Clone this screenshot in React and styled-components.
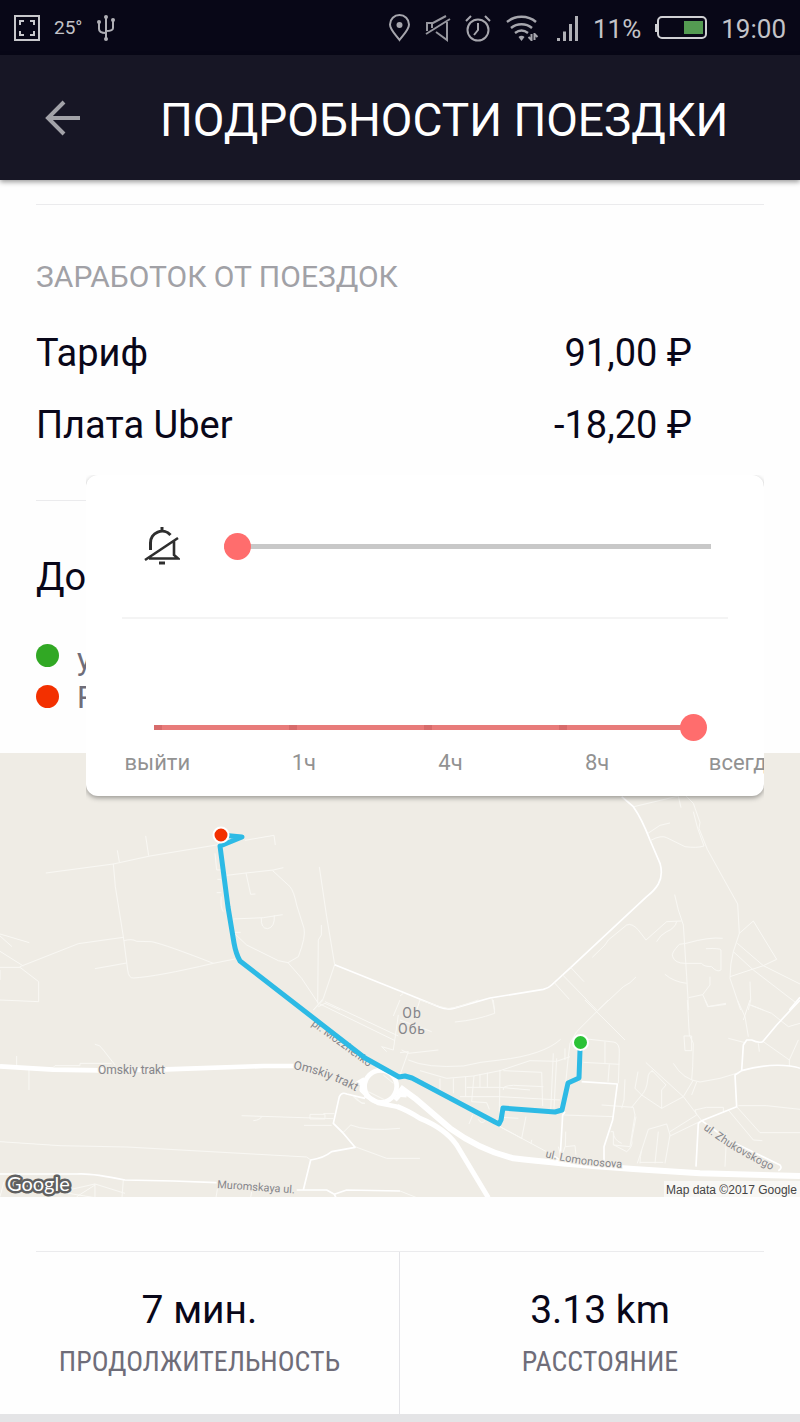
import { useState } from 'react';
import styled, { createGlobalStyle } from 'styled-components';

const GlobalStyle = createGlobalStyle`
  * {
    box-sizing: border-box;
  }

  body {
    margin: 0;
    background: #fefefe;
    color: #090719;
    font-family: Roboto, "Liberation Sans", sans-serif;
  }
`;

const Page = styled.div`
  position: relative;
`;

const StatusBar = styled.div`
  display: flex;
  justify-content: space-between;
  height: 55px;
  padding: 0 14px;
  background: #080717;
`;

const StatusGroup = styled.div`
  display: flex;
  align-items: center;
  gap: 14px;

  svg {
    flex: none;
  }
`;

const StatusText = styled.span`
  padding-top: 3px;
  color: #c3c3c8;
  font-size: 26px;
`;

const Temperature = styled.span`
  color: #c3c3c8;
  font-size: 19px;
`;

const AppBar = styled.header`
  position: relative;
  display: flex;
  align-items: center;
  gap: 72px;
  height: 125px;
  padding: 0 36px;
  background: #171625;
  box-shadow: 0 2px 5px rgba(0, 0, 0, 0.4);
`;

const BackButton = styled.button`
  display: flex;
  padding: 0;
  border: 0;
  background: none;
`;

const Title = styled.h1`
  margin: 0;
  padding-top: 4px;
  color: #fff;
  font-size: 46px;
  font-weight: 400;
  line-height: 56px;
  white-space: nowrap;
`;

const Section = styled.section`
  margin: 0 36px;
  border-top: 1px solid #ebebed;
`;

const Earnings = styled(Section)`
  margin-top: 24px;
  padding: 52px 72px 39px 0;
`;

const SectionTitle = styled.h2`
  margin: 0 0 20px;
  color: #a1a1a6;
  font-size: 30px;
  font-weight: 400;
  line-height: 40px;
`;

const Row = styled.div`
  display: flex;
  justify-content: space-between;
  font-size: 38px;
  line-height: 72px;
`;

const Income = styled(Section)`
  padding: 40px 0 36px;
`;

const Route = styled.div`
  display: flex;
  gap: 18px;
  margin-top: 28px;
`;

const Dots = styled.div`
  display: flex;
  flex-direction: column;
  gap: 18px;
  padding-top: 3px;
`;

const Dot = styled.span`
  width: 23px;
  height: 23px;
  border-radius: 50%;
  background: ${({ $color }) => $color};
`;

const Stops = styled.ul`
  margin: 0;
  padding: 0;
  color: #6f6d79;
  font-size: 31px;
  line-height: 38px;
  list-style: none;
`;

const MapImage = styled.svg`
  display: block;
  width: 100%;
  height: auto;
  background: #efece5;
`;

const Summary = styled(Section)`
  margin-top: 54px;
`;

const Metrics = styled.div`
  display: grid;
  grid-template-columns: 1fr 1fr;
  margin: 0 -36px;
`;

const Metric = styled.div`
  padding: 30px 0;
  text-align: center;

  &:first-child {
    border-right: 1px solid #e4e4e8;
  }
`;

const MetricValue = styled.div`
  font-size: 39px;
  line-height: 56px;
`;

const MetricName = styled.div`
  padding-top: 2px;
  color: #6f6d79;
  font-family: "Roboto Condensed", Roboto, sans-serif;
  font-size: 28px;
  line-height: 44px;
`;

const Footer = styled.div`
  height: 8px;
  background: #e4e4e6;
`;

const VolumeCard = styled.div`
  position: absolute;
  top: 475px;
  right: 36px;
  left: 86px;
  padding: 0 36px 19px;
  border-radius: 12px;
  background: #fff;
  box-shadow: 0 2px 5px rgba(0, 0, 0, 0.36);
  clip-path: inset(0 0 -10px 0);
`;

const VolumeRow = styled.div`
  display: flex;
  align-items: center;
  gap: 44px;
  height: 142px;
  padding: 0 17px 0 22px;
`;

const DurationRow = styled.div`
  padding: 94px 21px 0 18px;
  border-top: 2px solid #f4f4f4;
`;

const Range = styled.input`
  display: block;
  flex: 1;
  width: 100%;
  height: 28px;
  margin: 0;
  background: none;
  appearance: none;

  &::-webkit-slider-runnable-track {
    height: 5px;
    background: #c8c8c8;
  }

  &::-webkit-slider-thumb {
    width: 27px;
    height: 27px;
    margin-top: -11px;
    border-radius: 50%;
    background: #ff6d6d;
    appearance: none;
  }
`;

const StepRange = styled(Range)`
  &::-webkit-slider-runnable-track {
    background: repeating-linear-gradient(90deg, #d76b6b 0 8px, #e87b7a 8px 25%) center / calc(100% - 27px) 100% no-repeat;
  }
`;

const Steps = styled.div`
  display: grid;
  grid-template-columns: repeat(5, 1fr);
  margin: 8px -110px 0 -56px;
  color: #929292;
  font-size: 22px;
  line-height: 28px;
  text-align: center;
`;

const earnings = [
  { name: 'Тариф', amount: '91,00 ₽' },
  { name: 'Плата Uber', amount: '-18,20 ₽' },
];

const steps = ['выйти', '1ч', '4ч', '8ч', 'всегда'];

const StatusIcons = () => (
  <>
    <svg width="23" height="28" viewBox="0 0 23 28" fill="none" stroke="#a6a6ad" strokeWidth="2">
      <path d="M11.500 26C7 20 2 15.500 2 10.500a9.500 9.500 0 0 1 19 0C21 15.500 16 20 11.500 26z" />
      <circle cx="11.500" cy="11" r="3" fill="#a6a6ad" stroke="none" />
    </svg>
    <svg width="26" height="28" viewBox="0 0 26 28" fill="none" stroke="#96969e" strokeWidth="2">
      <path d="M2 17V9h6L21 2M22 8v18l-11-8M1 20L25 5" />
      <path d="M7 9v5" />
    </svg>
    <svg width="26" height="28" viewBox="0 0 26 28" fill="none" stroke="#a6a6ad" strokeWidth="2">
      <circle cx="13" cy="16" r="10.500" />
      <path d="M13 9v7l-4 5M1 7l5-5M25 7l-5-5" />
    </svg>
    <svg width="38" height="28" viewBox="0 0 38 28" fill="none" stroke="#a6a6ad" strokeWidth="2.400">
      <path d="M2 8c8-7 21-7 29 0M6 14c6-5 15-5 21 0M10 19c4-3 9-3 13 0" />
      <path d="M13.500 23a4 4 0 0 1 6 0l-3 4z" fill="#a6a6ad" stroke="none" />
      <path d="M26.500 20v7M29.500 19v7M26.500 26l-3-3M29.500 20l3 3" strokeWidth="2" />
    </svg>
    <svg width="22" height="28" viewBox="0 0 22 28" fill="#b0b0b6">
      <path d="M0 24h3v3H0zM6 17.500h3V27H6zM12 10h3v17h-3zM18 2h3v25h-3z" />
    </svg>
  </>
);

const TripMap = () => (
  <MapImage viewBox="0 0 800 444" role="img" aria-label="Map">
    <defs>
      <path id="mozzhenko" d="M311 272L378 321" />
      <path id="omskiy" d="M293 316Q328 322 360 341" />
      <path id="lomonosova" d="M545 404Q580 413 626 415" />
      <path id="zhukovskogo" d="M703 376Q735 401 778 420" />
    </defs>

    {/* four quarters of the road net, drawn at three units to a pixel */}
    <g fill="none" stroke="#f9f8f4" strokeWidth="3" strokeLinejoin="round">
      <g transform="translate(0 37) scale(.33333)">
        <path d="M138 249L340 222L450 198L655 164M735 151L822 136L826 165M352 181L358 216M437 138L446 197M340 222L346 290L370 440L383 540Q386 565 400 564Q470 560 640 520L705 507M285 536L380 519M60 530L235 461L370 442M372 452Q395 445 410 454L455 455Q500 465 640 520" />
        <path d="M0 484L70 528M0 432L88 458M0 438L36 470M0 532H60L116 575V635L0 630M0 540V570M645 190L650 240H665M680 256L738 249L820 240L850 233M738 249L752 313L766 312M818 242L870 290Q882 305 890 345L912 415Q918 440 895 500L864 518L835 512L740 465L705 432M864 518L905 565L955 640M700 387L790 383L848 374M784 384Q782 416 803 416Q825 412 823 376M652 268H664M650 308H664M664 320Q660 350 670 365M700 427H722" />
        <path d="M958 231L980 380L1004 524L970 625L940 660M964 405V435L955 450L953 640M955 650L975 640L1020 660" />
        <path d="M1004 524L1200 603" stroke="#fff" strokeWidth="5" />
      </g>
      <g transform="translate(400 37) scale(.33333)">
        <path d="M665 20L700 50Q725 85 750 150L780 220Q790 255 775 282Q765 300 740 320L515 530L455 585Q445 595 430 598L270 624L160 655Q140 660 120 652L0 603" stroke="#fff" strokeWidth="5" />
        <path d="M702 50L835 18L843 53M858 18L880 40L900 97L897 115L922 178L970 265L1013 342L1018 430L1000 485Q990 520 990 565L1022 660M880 65L893 115L912 168Q890 175 855 170L800 143Q785 134 752 151M744 130L780 106L810 99" />
        <path d="M577 502L615 465L625 450L680 405Q695 398 715 420L738 450L800 395L845 393M770 455Q780 435 800 425Q825 415 830 395M824 314L835 360L850 405L860 560L866 660M968 445Q930 440 858 460L838 463Q812 490 818 500Q825 520 855 520H905Q910 530 935 530Q950 548 963 540V480Q960 474 918 476M795 553Q820 575 860 580M866 623L908 614L930 585V560M908 614L925 650L978 643M1018 430L1060 393L1130 508L1090 527L990 560M1012 460L1090 527L1200 582M1000 485L1060 540L1190 640M1050 575L1052 630L1045 660M1052 645L1090 660M512 532L552 575M487 554L590 660M463 578L508 628M595 660L670 590L690 578L708 561M276 626L284 660M60 630L50 660M0 618L10 610" />
        <path d="M1168 660L1200 622" stroke="#fff" strokeWidth="5" />
      </g>
      <g transform="translate(0 247) scale(.33333)">
        <path d="M87 210V270M50 168V195M160 202L165 197H240V190H335M285 133Q300 133 310 150L345 195M725 347L1000 356M785 350Q780 360 760 362M930 343H975V357H930zM970 341H1003M912 376H995M0 425L180 437L380 441L920 471L932 480M1000 370L1030 397L1052 375Q1100 395 1200 385M1030 402L1065 440L1160 475H1200M940 30L970 0M960 12L1185 122M975 5L1195 108M1195 45L1180 150L1145 140L1160 155M1200 0L1180 48M0 590L12 545M205 570L285 552V593L205 580M285 552L375 580M370 540L366 593M655 550L648 593M755 575L752 593M1065 290L1085 310H1095M1060 290Q1080 310 1095 310M230 590L285 555" />
        <path d="M0 522H230Q270 518 375 540L520 543L650 548M890 570H980L1003 583L1040 570L1200 573M1003 583L1008 593M910 570L932 480Q970 475 995 455L1065 442L1030 400L1000 370L1018 290Q1025 275 1040 282L1095 295" stroke="#fff" strokeWidth="5" />
        <g stroke="#fff" strokeWidth="14">
          <path d="M0 199L160 209L300 211L500 208L790 198L885 198M1065 255L1090 240L1085 270L1105 290" />
          <circle cx="1142" cy="259" r="48" />
          <path d="M1095 285L1135 309L1200 322M1185 270L1200 280M1185 300L1200 283" />
        </g>
        <path d="M1150 225L1180 250M1105 275L1155 300" />
      </g>
      <g transform="translate(400 247) scale(.33333)">
        <path d="M60 0L120 20Q145 30 170 22L235 0M280 0L284 40Q230 60 165 66M0 158L25 155L0 225M5 150L25 160L115 150M25 180Q80 205 190 198Q240 185 300 180Q430 165 482 118M60 212L140 235L220 228L300 212L390 182L470 184L510 170M0 60L95 95M555 0L675 120M625 0L530 95L510 130L505 170L490 320M540 118L570 118L640 126Q660 128 658 160L655 250M615 125V190M550 187L658 193M628 193L624 245M120 235V275M160 235V280M197 230V290M222 228L215 305L260 308L268 328M240 222V262M262 218V262M200 262L300 262L390 270M300 210L298 340M310 270Q305 257 340 256L430 260M310 212L425 217L428 318M180 290H300L480 300M460 160L452 335M470 175L462 325M495 145V180M218 345L207 372M235 358Q245 375 255 362M250 340L290 375M300 380L365 415L378 350M305 352L355 355M395 420L393 430M300 380L445 458" />
        <path d="M675 238L672 300L665 325M605 315L700 322L705 345L690 440L640 435V395H632M642 435L680 455Q700 440 695 420L708 350M695 322L725 285L705 265L714 215M725 285L785 325L850 290M760 215Q745 210 743 240Q740 270 725 285M755 210L798 255L785 270V325M738 188L850 290L905 362M820 190Q850 240 900 246L960 235L1010 220M890 246L875 285M850 290L880 240M712 490L725 450L745 388L800 372L810 405L795 490M725 450Q720 470 720 490M775 395L765 490M810 395L890 345L885 330L920 322L970 322V335M810 408L905 362M490 345L640 350M497 395L496 440L525 437L528 465M495 440L487 465M475 440L490 495M640 395Q640 420 665 430M720 487H790" />
        <path d="M862 0L868 105L880 130L878 200L875 240M852 108H875V152H855zM915 0L923 20L978 10M1012 0L1035 50L1045 110M1050 15L1115 40L1165 80L1200 70M1050 0L1030 60M985 115L1035 128M1075 130L1078 155M1090 125L1168 180L1195 120M1168 180V200M1010 320L1080 398H1200M1015 317H1100L1200 328M985 330L1010 360L1060 420L1087 422M980 400L975 500" />
        <path d="M445 458L480 480L488 345L495 335M545 245L652 252L638 360L612 440V490M1200 0L1130 75L1088 125Q1075 130 1055 120H1040L1030 135L1025 212L1005 225L1010 320L905 362L895 370L888 500M1025 212Q1100 190 1170 198Q1190 200 1200 205M905 362L985 420L1140 495Q1148 505 1135 512" stroke="#fff" strokeWidth="5" />
        <g stroke="#fff">
          <path d="M0 262L45 295L150 385Q240 450 340 475Q460 490 700 507L900 520L1200 528" strokeWidth="18" />
          <path d="M-8 283L20 285M-8 320Q20 330 60 355Q135 385 170 435L265 593" strokeWidth="15" />
        </g>
        <path d="M0 573L50 593M0 475H60" />
      </g>
    </g>

    <g
      fill="#85858a"
      stroke="#efece5"
      strokeWidth="2"
      paintOrder="stroke"
      fontSize="11"
      fontFamily="Roboto, sans-serif"
    >
      <text x="98" y="321" fontSize="12">Omskiy trakt</text>
      <text fontSize="12"><textPath href="#omskiy">Omskiy trakt</textPath></text>
      <text transform="translate(217 435) rotate(4)">Muromskaya ul.</text>
      <text><textPath href="#mozzhenko">pr. Mozzhenko</textPath></text>
      <text><textPath href="#lomonosova">ul. Lomonosova</textPath></text>
      <text><textPath href="#zhukovskogo">ul. Zhukovskogo</textPath></text>
      <g fontSize="14" textAnchor="middle" letterSpacing="1">
        <text x="412" y="265">Ob</text>
        <text x="412" y="281">Обь</text>
      </g>
    </g>

    <path
      d="M221 82L242 84L220 93L228 154L234 190Q236 201 240 208L365 305L399 324L405 323L412 325L495 369L499 371L501 367L503 355L555 359L562 357L568 330L579 325L580 297"
      fill="none"
      stroke="#2dbae5"
      strokeWidth="5"
      strokeLinejoin="round"
    />
    <circle cx="221" cy="82" r="7.500" fill="#f33000" stroke="#fff" strokeWidth="2" />
    <circle cx="580.500" cy="289.500" r="7.500" fill="#2bc236" stroke="#fff" strokeWidth="2" />

    <text
      x="7"
      y="438"
      fill="#fff"
      stroke="#606060"
      strokeWidth="5"
      strokeLinejoin="round"
      paintOrder="stroke"
      fontFamily="Lato, sans-serif"
      fontSize="20"
      fontWeight="400"
    >
      Google
    </text>
    <path d="M664 428h136v16H664z" fill="#f8f7f4" />
    <text x="666" y="441" fill="#444" fontFamily="Liberation Sans, sans-serif" fontSize="12">
      Map data ©2017 Google
    </text>
  </MapImage>
);

const App = () => {
  const [volume, setVolume] = useState(0);
  const [duration, setDuration] = useState(4);

  return (
    <Page>
      <GlobalStyle />
      <StatusBar>
        <StatusGroup>
          <svg width="26" height="26" viewBox="0 0 26 26" fill="none" stroke="#c8c8cc" strokeWidth="2">
            <path d="M1 1h24v24H1zM6 10V6h4M16 6h4v4M20 16v4h-4M10 20H6v-4" />
          </svg>
          <Temperature>25°</Temperature>
          <svg width="22" height="28" viewBox="0 0 22 28" fill="none" stroke="#b0b0b6" strokeWidth="2">
            <path d="M10 3v23M3 8v7q0 4 7 4M17 6v8q0 3-7 3" />
            <g fill="#b0b0b6" stroke="none">
              <circle cx="10" cy="3" r="2" />
              <circle cx="3" cy="8" r="2" />
              <circle cx="17" cy="6" r="2" />
              <circle cx="10" cy="25" r="2" />
            </g>
          </svg>
        </StatusGroup>
        <StatusGroup>
          <StatusIcons />
          <StatusText>11%</StatusText>
          <svg width="52" height="24" viewBox="0 0 52 24">
            <path d="M0 8h3v8H0z" fill="#d0d0d4" />
            <rect x="3" y="1" width="48" height="21" rx="4" fill="none" stroke="#d0d0d4" strokeWidth="2" />
            <path d="M29 5h19v13H29z" fill="#549b52" />
          </svg>
          <StatusText>19:00</StatusText>
        </StatusGroup>
      </StatusBar>

      <AppBar>
        <BackButton aria-label="Назад">
          <svg width="52" height="52" viewBox="0 0 52 52" fill="none" stroke="#a2a2a8" strokeWidth="4">
            <path d="M44 26H12M28 10L12 26l16 16" />
          </svg>
        </BackButton>
        <Title>ПОДРОБНОСТИ ПОЕЗДКИ</Title>
      </AppBar>

      <main>
        <Earnings>
          <SectionTitle>ЗАРАБОТОК ОТ ПОЕЗДОК</SectionTitle>
          {earnings.map((item) => (
            <Row key={item.name}>
              <span>{item.name}</span>
              <span>{item.amount}</span>
            </Row>
          ))}
        </Earnings>
        <Income>
          <Row>До</Row>
          <Route>
            <Dots>
              <Dot $color="#31a824" />
              <Dot $color="#f33000" />
            </Dots>
            <Stops>
              <li>у</li>
              <li>Р</li>
            </Stops>
          </Route>
        </Income>
        <TripMap />
        <Summary>
          <Metrics>
            <Metric>
              <MetricValue>7 мин.</MetricValue>
              <MetricName>ПРОДОЛЖИТЕЛЬНОСТЬ</MetricName>
            </Metric>
            <Metric>
              <MetricValue>3.13 km</MetricValue>
              <MetricName>РАССТОЯНИЕ</MetricName>
            </Metric>
          </Metrics>
        </Summary>
      </main>
      <Footer />

      <VolumeCard>
        <VolumeRow>
          <svg width="36" height="38" viewBox="0 0 36 38" fill="none" stroke="#2e2e2e" strokeWidth="3">
            <path d="M18 0v5M6.500 23v-7a11.500 11.500 0 0 1 20-8" />
            <path d="M1 33L34 11M30 14v14l4 3.500H5" strokeWidth="2.600" />
            <path d="M15 36h6" />
          </svg>
          <Range
            type="range"
            min="0"
            max="15"
            value={volume}
            onChange={(e) => setVolume(e.target.value)}
            aria-label="Громкость"
          />
        </VolumeRow>
        <DurationRow>
          <StepRange
            type="range"
            min="0"
            max="4"
            value={duration}
            onChange={(e) => setDuration(e.target.value)}
            aria-label="Длительность"
          />
          <Steps>
            {steps.map((step) => (
              <span key={step}>{step}</span>
            ))}
          </Steps>
        </DurationRow>
      </VolumeCard>
    </Page>
  );
};

export default App;
